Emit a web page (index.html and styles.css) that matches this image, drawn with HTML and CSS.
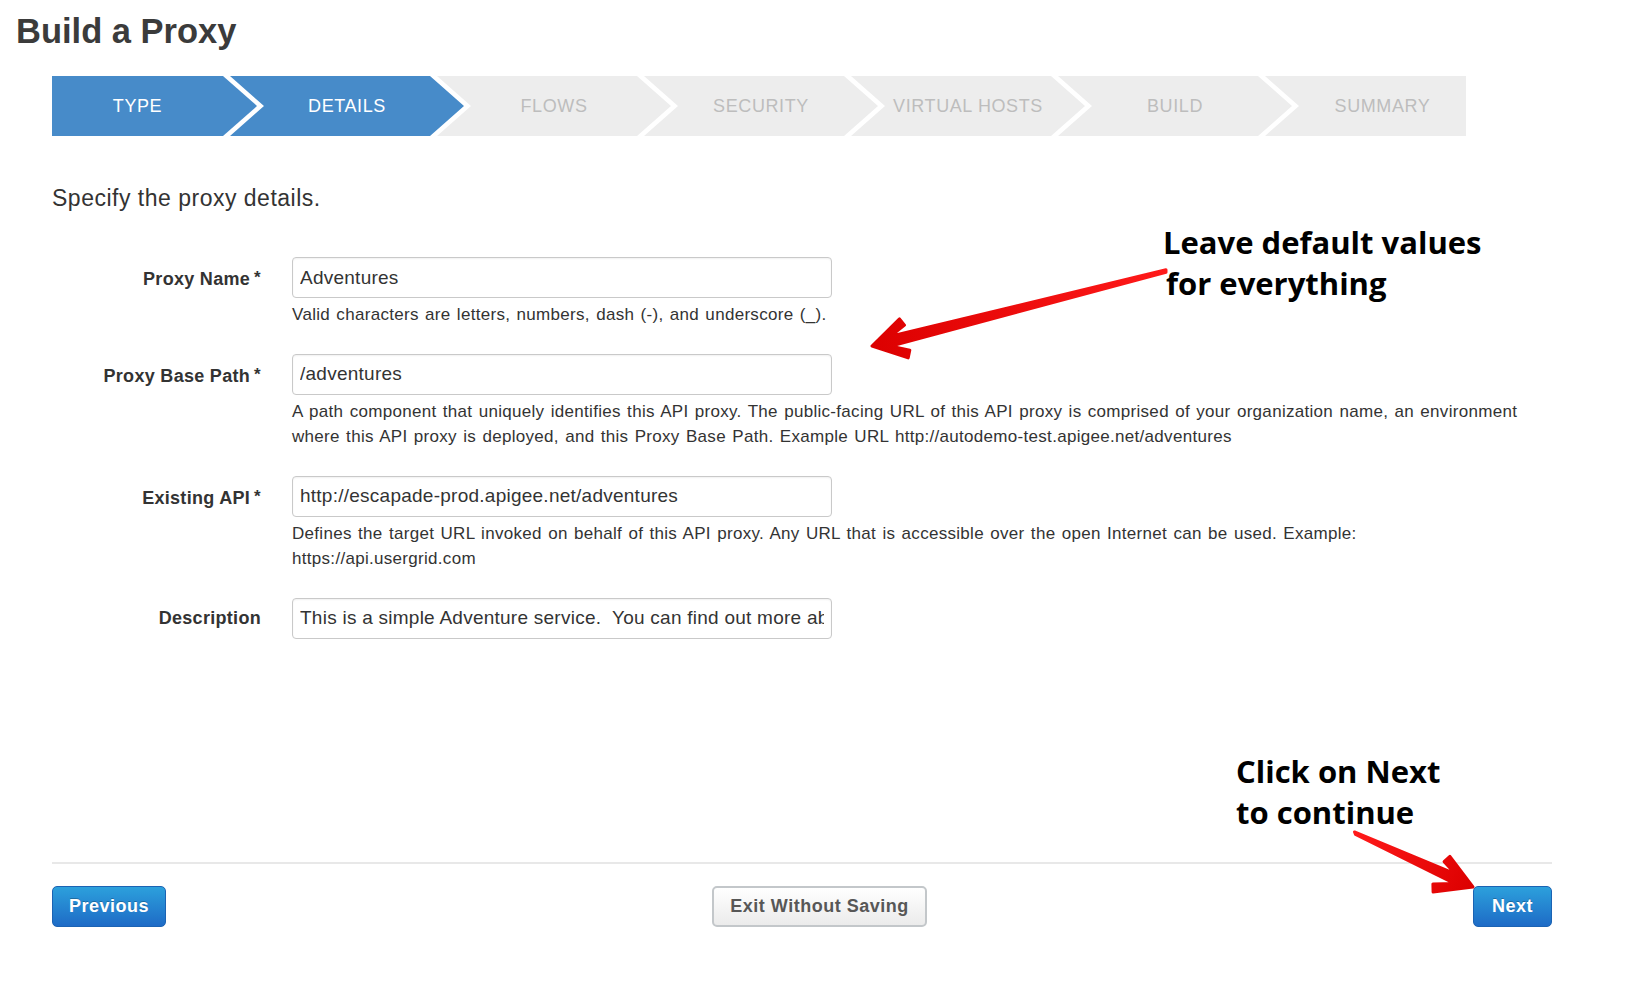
FILE: index.html
```html
<!DOCTYPE html>
<html lang="en">
<head>
<meta charset="utf-8">
<title>Build a Proxy</title>
<link rel="stylesheet" href="styles.css">
</head>
<body>
<h1 class="title">Build a Proxy</h1>
<div class="wizard">
  <ol class="steps">
    <li class="step step-first is-done">TYPE</li>
    <li class="step is-done">DETAILS</li>
    <li class="step">FLOWS</li>
    <li class="step">SECURITY</li>
    <li class="step">VIRTUAL HOSTS</li>
    <li class="step">BUILD</li>
    <li class="step step-last">SUMMARY</li>
  </ol>

  <p class="intro">Specify the proxy details.</p>

  <form class="form">
    <div class="row">
      <label class="label">Proxy Name<span class="req">*</span></label>
      <div class="field">
        <input class="input" type="text" value="Adventures">
        <p class="help">Valid characters are letters, numbers, dash (-), and underscore (_).</p>
      </div>
    </div>
    <div class="row">
      <label class="label">Proxy Base Path<span class="req">*</span></label>
      <div class="field">
        <input class="input" type="text" value="/adventures">
        <p class="help">A path component that uniquely identifies this API proxy. The public-facing URL of this API proxy is comprised of your organization name, an environment<br>where this API proxy is deployed, and this Proxy Base Path. Example URL http://autodemo-test.apigee.net/adventures</p>
      </div>
    </div>
    <div class="row">
      <label class="label">Existing API<span class="req">*</span></label>
      <div class="field">
        <input class="input" type="text" value="http://escapade-prod.apigee.net/adventures">
        <p class="help">Defines the target URL invoked on behalf of this API proxy. Any URL that is accessible over the open Internet can be used. Example:<br>https://api.usergrid.com</p>
      </div>
    </div>
    <div class="row">
      <label class="label">Description</label>
      <div class="field">
        <input class="input" type="text" value="This is a simple Adventure service.  You can find out more about it online.">
      </div>
    </div>
  </form>

  <div class="footer">
    <button class="btn btn-primary btn-prev" type="button">Previous</button>
    <button class="btn btn-default" type="button">Exit Without Saving</button>
    <button class="btn btn-primary btn-next" type="button">Next</button>
  </div>
</div>

<div class="note note-defaults">Leave default values<br><span class="note-indent">for everything</span></div>
<div class="note note-next">Click on Next<br>to continue</div>

<svg class="arrows" width="1630" height="982" viewBox="0 0 1630 982" aria-hidden="true">
  <defs>
    <linearGradient id="redA" x1="1166" y1="271" x2="872" y2="346" gradientUnits="userSpaceOnUse">
      <stop offset="0" stop-color="#ff1a1a"/>
      <stop offset="1" stop-color="#dc0000"/>
    </linearGradient>
    <linearGradient id="redB" x1="1355" y1="833" x2="1473" y2="887" gradientUnits="userSpaceOnUse">
      <stop offset="0" stop-color="#ff1a1a"/>
      <stop offset="1" stop-color="#dc0000"/>
    </linearGradient>
  </defs>
  <polygon fill="url(#redA)" stroke="url(#redA)" stroke-width="3" stroke-linejoin="round"
    points="1166,269.8 890.5,336.3 904.5,325.1 899.5,318.9 872,346 908.2,357.9 909.8,350.1 891.2,346.1 1166,272.2"/>
  <polygon fill="url(#redB)" stroke="url(#redB)" stroke-width="3" stroke-linejoin="round"
    points="1354.5,832 1455.5,874 1444.1,861.7 1449.9,856.3 1473,887 1433.1,892 1432.9,884 1454.3,883.5 1355.5,834.5"/>
</svg>
</body>
</html>
```

FILE: styles.css
```css
* {
  box-sizing: border-box;
}

html, body {
  margin: 0;
  padding: 0;
  background: #ffffff;
}

body {
  position: relative;
  width: 1630px;
  height: 982px;
  overflow: hidden;
  font-family: "Liberation Sans", Arial, Helvetica, sans-serif;
  color: #333333;
}

.title {
  margin: 11px 0 0 16px;
  height: 40px;
  font-size: 34.5px;
  line-height: 40px;
  font-weight: bold;
  color: #3b3b3b;
}

.wizard {
  margin-left: 52px;
  width: 1500px;
}

/* ---------- steps ---------- */
.steps {
  display: flex;
  list-style: none;
  margin: 25px 0 0;
  padding: 0;
  height: 60px;
}

.step {
  display: flex;
  align-items: center;
  justify-content: center;
  width: 234px;
  height: 60px;
  margin-left: -27px;
  padding: 0 34px;
  background: #ededed;
  color: #bdbdbd;
  font-size: 18px;
  letter-spacing: 0.6px;
  white-space: nowrap;
  clip-path: polygon(0 0, calc(100% - 34px) 0, 100% 50%, calc(100% - 34px) 100%, 0 100%, 34px 50%);
}

.step-first {
  width: 205px;
  margin-left: 0;
  padding: 0 34px 0 0;
  clip-path: polygon(0 0, calc(100% - 34px) 0, 100% 50%, calc(100% - 34px) 100%, 0 100%);
}

.step-last {
  width: 201px;
  padding: 0 0 0 34px;
  clip-path: polygon(0 0, 100% 0, 100% 100%, 0 100%, 34px 50%);
}

.step.is-done {
  background: #478bc9;
  color: #ffffff;
}

/* ---------- intro ---------- */
.intro {
  margin: 49px 0 0;
  font-size: 23px;
  line-height: 26px;
  letter-spacing: 0.5px;
  color: #333333;
}

/* ---------- form ---------- */
.form {
  margin-top: 46px;
}

.row {
  display: grid;
  grid-template-columns: 209px 1fr;
  column-gap: 31px;
  margin-bottom: 26px;
}

.label {
  text-align: right;
  font-size: 18px;
  font-weight: bold;
  letter-spacing: 0.3px;
  line-height: 41px;
  color: #333333;
  white-space: nowrap;
}

.req {
  margin-left: 4px;
  font-size: 17px;
  vertical-align: 2px;
}

.field {
  min-width: 0;
}

.input {
  display: block;
  width: 540px;
  height: 41px;
  margin: 0;
  padding: 0 7px;
  border: 1px solid #c9c9c9;
  border-radius: 4px;
  box-shadow: inset 0 1px 2px rgba(0, 0, 0, 0.06);
  background: #ffffff;
  font-family: "Liberation Sans", Arial, Helvetica, sans-serif;
  font-size: 19px;
  letter-spacing: 0.25px;
  color: #333333;
  outline: none;
}

.help {
  margin: 4px 0 0;
  font-size: 17px;
  letter-spacing: 0.3px;
  word-spacing: 1.3px;
  line-height: 25.5px;
  color: #333333;
  white-space: nowrap;
}

/* ---------- footer ---------- */
.footer {
  display: flex;
  justify-content: space-between;
  align-items: flex-start;
  margin-top: 223px;
  padding-top: 22px;
  border-top: 2px solid #e8e8e8;
}

.btn {
  height: 41px;
  margin: 0;
  border-radius: 5px;
  font-family: "Liberation Sans", Arial, Helvetica, sans-serif;
  font-size: 18px;
  font-weight: bold;
  letter-spacing: 0.5px;
  cursor: pointer;
}

.btn-primary {
  border: 1px solid #1b63b3;
  background: linear-gradient(#2ca0dc, #1e6bc6);
  color: #ffffff;
  text-shadow: 0 -1px 0 rgba(0, 0, 0, 0.25);
}

.btn-prev {
  padding: 0 16px;
}

.btn-next {
  padding: 0 18px;
}

.btn-default {
  padding: 0 16px;
  border: 2px solid #c3c7ca;
  background: linear-gradient(#ffffff, #ebebeb);
  color: #575757;
}

/* ---------- annotations ---------- */
.note {
  position: absolute;
  font-family: "Open Sans", "Liberation Sans", sans-serif;
  font-weight: 700;
  font-size: 31px;
  line-height: 41px;
  color: #000000;
  white-space: nowrap;
}

.note-indent {
  margin-left: 3px;
}

.note-defaults {
  left: 1163px;
  top: 222px;
}

.note-next {
  left: 1236px;
  top: 751px;
}

.arrows {
  position: absolute;
  left: 0;
  top: 0;
  pointer-events: none;
}
```
